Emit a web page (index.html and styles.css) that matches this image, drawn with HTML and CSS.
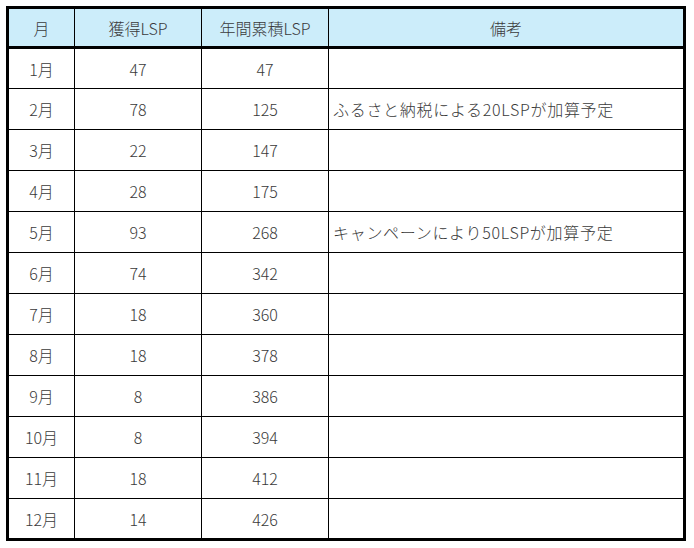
FILE: index.html
```html
<!DOCTYPE html>
<html lang="ja">
<head>
<meta charset="utf-8">
<link rel="stylesheet" href="styles.css">
</head>
<body>
<div class="sheet">
  <div class="cell head">月</div>
  <div class="cell head">獲得LSP</div>
  <div class="cell head">年間累積LSP</div>
  <div class="cell head">備考</div>

  <div class="cell">1月</div><div class="cell">47</div><div class="cell">47</div><div class="cell note"></div>
  <div class="cell">2月</div><div class="cell">78</div><div class="cell">125</div><div class="cell note">ふるさと納税による20LSPが加算予定</div>
  <div class="cell">3月</div><div class="cell">22</div><div class="cell">147</div><div class="cell note"></div>
  <div class="cell">4月</div><div class="cell">28</div><div class="cell">175</div><div class="cell note"></div>
  <div class="cell">5月</div><div class="cell">93</div><div class="cell">268</div><div class="cell note">キャンペーンにより50LSPが加算予定</div>
  <div class="cell">6月</div><div class="cell">74</div><div class="cell">342</div><div class="cell note"></div>
  <div class="cell">7月</div><div class="cell">18</div><div class="cell">360</div><div class="cell note"></div>
  <div class="cell">8月</div><div class="cell">18</div><div class="cell">378</div><div class="cell note"></div>
  <div class="cell">9月</div><div class="cell">8</div><div class="cell">386</div><div class="cell note"></div>
  <div class="cell">10月</div><div class="cell">8</div><div class="cell">394</div><div class="cell note"></div>
  <div class="cell">11月</div><div class="cell">18</div><div class="cell">412</div><div class="cell note"></div>
  <div class="cell">12月</div><div class="cell">14</div><div class="cell">426</div><div class="cell note"></div>
</div>
</body>
</html>
```

FILE: styles.css
```css
html, body {
  margin: 0;
  padding: 0;
  background: #ffffff;
}

body {
  padding: 6px 0 0 6px;
  font-family: "Noto Sans CJK JP", "Noto Sans", sans-serif;
  font-size: 16px;
  font-weight: 300;
  color: #3a3a3a;
}

.sheet {
  display: grid;
  grid-template-columns: 65px 126px 126px 354px;
  grid-template-rows: 39px 39px repeat(10, 40px) 39px;
  gap: 1px;
  width: max-content;
  background: #000000;
  border: 3px solid #000000;
}

.cell {
  background: #ffffff;
  display: flex;
  align-items: center;
  justify-content: center;
  line-height: 1;
  white-space: nowrap;
}

.head {
  background: #ccedfa;
  margin-bottom: 2px;
}

.note {
  justify-content: flex-start;
  padding-left: 4px;
  letter-spacing: 0.7px;
}
```
